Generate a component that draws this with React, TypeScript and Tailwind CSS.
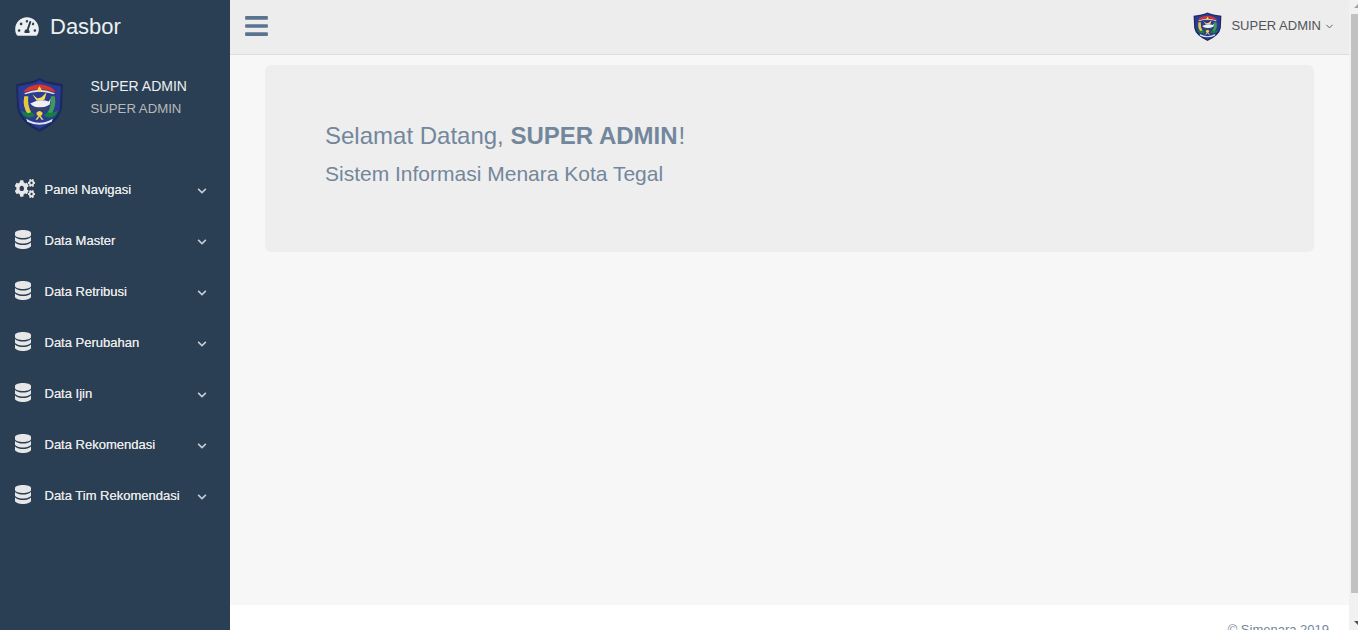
import { FaBars, FaChevronDown, FaCogs, FaTachometerAlt } from "react-icons/fa";
import { LuChevronDown } from "react-icons/lu";

const menu = ["Data Master", "Data Retribusi", "Data Perubahan", "Data Ijin", "Data Rekomendasi", "Data Tim Rekomendasi"];

function Crest({ className }: { className: string }) {
  return (
    <svg viewBox="0 0 48 54" preserveAspectRatio="none" className={className}>
      <path d="M1 7 L12 5 Q19 4 24 1 Q29 4 36 5 L47 7 L46 30 Q44 44 24 54 Q4 44 2 30 Z" fill="#1b2a5c" />
      <path d="M3 9 L13 7 Q20 6 24 3 Q28 6 35 7 L45 9 L44 30 Q42 42 24 51 Q6 42 4 30 Z" fill="#2b3a94" />
      <path d="M8 15 Q12 8 24 7 Q36 8 40 15 L36 14 Q24 10 12 14 Z" fill="#d8352c" />
      <path d="M9 16 Q24 9 39 16 L38 17 Q24 12 10 17 Z" fill="#e8e2c8" />
      <path d="M24 9 L26 12 L24 15 L22 12 Z" fill="#f4dc58" />
      <path d="M9 19 Q7 30 13 37 L16 35 Q12 28 13 19 Z" fill="#e2c93c" />
      <path d="M39 19 Q41 30 35 37 L32 35 Q36 28 35 19 Z" fill="#3f9a55" />
      <path d="M17 17 L22 21 L26 20 L31 15 L29 22 Q25 24 21 23 Z" fill="#f4dc58" />
      <path d="M15 26 Q24 21 33 24 L35 21 L34 27 Q30 30 24 30 Q18 30 15 26 Z" fill="#eef0f5" />
      <path d="M15 30 H33 L32 33 H16 Z" fill="#39455f" />
      <path d="M6 33 Q13 37 16 34 L20 38 Q13 42 8 37 Z" fill="#15803d" />
      <path d="M42 33 Q35 37 32 34 L28 38 Q35 42 40 37 Z" fill="#15803d" />
      <path d="M21 35 Q24 32 27 35 Q27 38 25 38 L28 42 H26 L24 39 L22 42 H20 L23 38 Q21 38 21 35 Z" fill="#f3d24a" />
      <path d="M11 41 Q24 49 37 41 L36 44 Q24 50 12 44 Z" fill="#dfe3ef" />
    </svg>
  );
}

function DatabaseIcon() {
  return (
    <svg viewBox="0 0 16 19" className="w-[16px] h-[19px]" fill="currentColor">
      <path d="M0 3 C0 1 4 0 8 0 S16 1 16 3 V5 C16 7 12 8 8 8 S0 7 0 5 Z" />
      <path d="M0 7 C2 9 5 9.5 8 9.5 S14 9 16 7 V10.5 C16 12 12 13.5 8 13.5 S0 12 0 10.5 Z" />
      <path d="M0 12.5 C2 14.5 5 15 8 15 S14 14.5 16 12.5 V16 C16 17.5 12 19 8 19 S0 17.5 0 16 Z" />
    </svg>
  );
}

function MenuItem({ label, gears }: { label: string; gears?: boolean }) {
  return (
    <li className="h-[51px] flex items-center pl-[15px] pr-[23px] text-[#E7E7E7] text-[13px] font-medium [text-shadow:0_0_0.3px_#E7E7E7]">
      <span className="w-[29.5px] -mt-[3px] shrink-0">
        {gears ? <FaCogs preserveAspectRatio="none" className="w-[20px] h-[19px]" /> : <DatabaseIcon />}
      </span>
      <span className="flex-1 whitespace-nowrap">{label}</span>
      <FaChevronDown className="w-[10px] h-[10px] mt-[2px] text-[#C4CCD4]" />
    </li>
  );
}

export default function App() {
  return (
    <div className="h-[630px] overflow-hidden flex font-['Liberation_Sans',Arial,sans-serif] text-[#73879C] bg-white">
      <aside className="w-[230px] shrink-0 bg-[#2A3F54]">
        <div className="h-[54px] flex items-center pl-[15px] pb-[2px] text-[#ECF0F1]">
          <FaTachometerAlt className="w-[24px] h-[21px]" />
          <span className="ml-[11px] text-[22px]">Dasbor</span>
        </div>
        <div className="h-[110px] flex pl-[15px] pt-[21px]">
          <Crest className="w-[49px] h-[55px] mt-[2px] shrink-0" />
          <div className="ml-[26.5px] pt-[1px]">
            <div className="text-[#ECF0F1] text-sm leading-[20px]">SUPER ADMIN</div>
            <div className="text-[#BAB8B8] text-[13.2px] leading-[20px] mt-[3px]">SUPER ADMIN</div>
          </div>
        </div>
        <ul>
          <MenuItem label="Panel Navigasi" gears />
          {menu.map((m) => (
            <MenuItem key={m} label={m} />
          ))}
        </ul>
      </aside>

      <div className="flex-1 min-w-0 flex flex-col">
        <header className="h-[55px] shrink-0 bg-[#EDEDED] border-b border-[#D9DEE4] flex items-center justify-between pl-[15px] pr-[14px]">
          <FaBars className="w-[23px] h-[26px] -mt-[2px] text-[#5A738E]" />
          <div className="flex items-center -mt-[2px] text-[#515356] text-[13px]">
            <Crest className="w-[29px] h-[29px]" />
            <span className="ml-[9px]">SUPER ADMIN</span>
            <LuChevronDown className="ml-[3px] w-[11px] h-[11px]" />
          </div>
        </header>
        <main className="h-[550px] shrink-0 bg-[#F7F7F7] pt-[10px] px-[35px]">
          <div className="h-[187px] bg-[#EEEEEE] rounded-md pl-[60px] pt-[56px]">
            <h1 className="text-[24px] leading-[29px]">
              Selamat Datang, <b className="mr-[1px]">SUPER ADMIN</b>!
            </h1>
            <p className="mt-[11px] text-[21px] leading-[25px]">Sistem Informasi Menara Kota Tegal</p>
          </div>
        </main>
        <footer className="h-[40px] shrink-0 bg-white flex justify-end pt-[16px] pr-[20px] text-[13px] leading-[18px]">
          © Simenara 2019
        </footer>
      </div>

      <div className="w-[9px] shrink-0 overflow-hidden bg-[#F1F1F1] flex flex-col items-end">
        <div className="h-[12px] shrink-0 flex items-center -mr-[4px]">
          <div className="w-0 h-0 border-x-[4px] border-x-transparent border-b-[4px] border-b-[#A3A3A3]" />
        </div>
        <div className="w-[7px] h-[579px] mt-[2px] shrink-0 bg-[#C1C1C1]" />
        <div className="mt-[28px] -mr-[4px] w-0 h-0 border-x-[4px] border-x-transparent border-t-[4px] border-t-[#505050]" />
      </div>
    </div>
  );
}
